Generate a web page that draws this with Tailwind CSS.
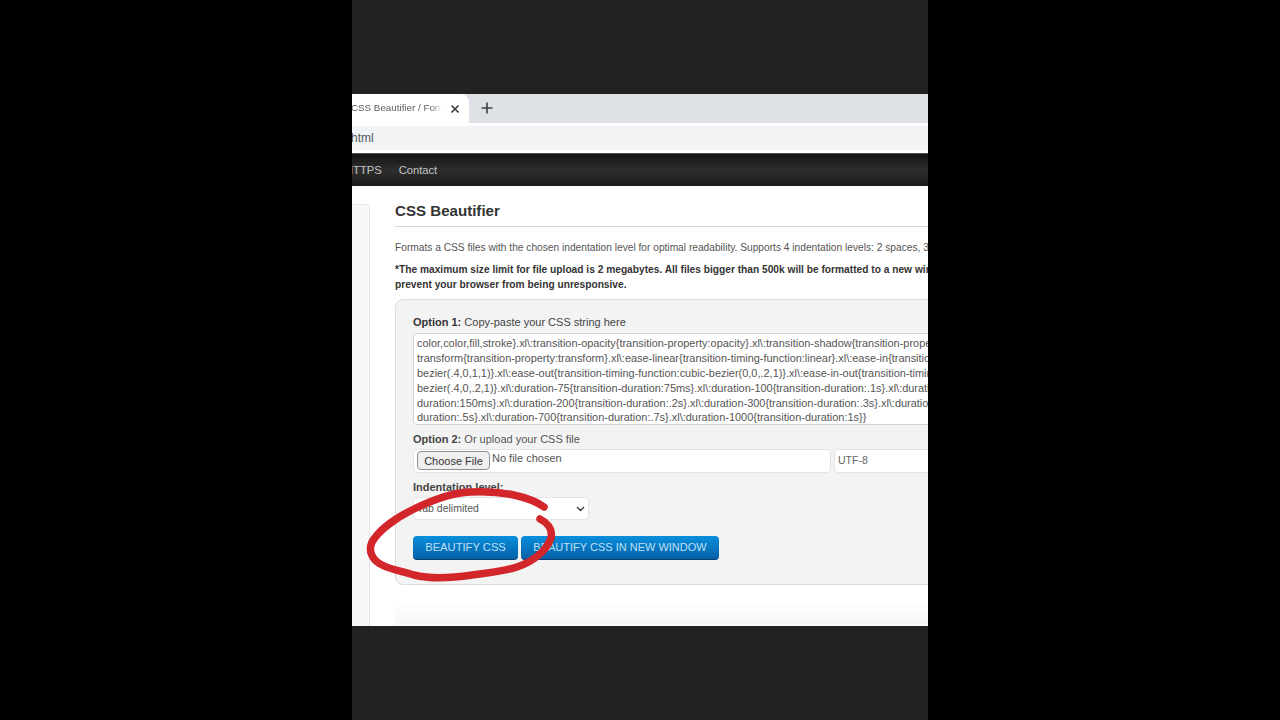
<!DOCTYPE html>
<html lang="en">
<head>
    <meta charset="UTF-8">
    <title>CSS Beautifier</title>
    <script src="https://cdn.jsdelivr.net/npm/@tailwindcss/browser@4"></script>
</head>
<body class="bg-black h-[720px] overflow-hidden font-['Liberation_Sans',Arial,sans-serif]">
    <div class="relative w-[576px] h-[720px] mx-auto bg-[#222222] pt-[94px] overflow-hidden">
        <div class="h-[532px] bg-white overflow-hidden">

            <!-- tab strip -->
            <div class="flex items-center h-[29px] bg-[#dee1e6]">
                <div class="flex items-center justify-between w-[117px] h-full bg-white rounded-tr-lg pr-[9px] -mr-px">
                    <span class="w-[91px] overflow-hidden whitespace-nowrap text-[9.8px] text-[#5a5d60] -ml-px [mask-image:linear-gradient(to_right,black_88%,transparent)]">CSS Beautifier / Format</span>
                    <svg class="w-[10px] h-[10px]" viewBox="0 0 10 10" fill="none" stroke="#3c4043" stroke-width="1.7"><path d="M1.5 1.5l7 7M8.5 1.5l-7 7"/></svg>
                </div>
                <svg class="w-3 h-3 ml-[13px] -mt-[2px]" viewBox="0 0 12 12" fill="none" stroke="#3c4043" stroke-width="1.6"><path d="M6 .5v11M.5 6h11"/></svg>
            </div>

            <!-- url bar -->
            <div class="h-[30px] bg-white pt-[3px]">
                <div class="h-6 bg-[#f1f3f4] text-xs leading-6 text-[#55585b] -ml-px">html</div>
            </div>

            <!-- nav -->
            <div class="flex items-center h-[33px] gap-[17px] bg-gradient-to-b from-[#151515] via-[#2e2e2e] to-[#1c1c1c] border-t border-[#555] text-[11.2px] text-[#c4c4c4] whitespace-nowrap">
                <span class="-ml-[7px]">HTTPS</span>
                <span>Contact</span>
            </div>

            <div class="flex pt-[18px]">
                <div class="w-[18px] h-[430px] shrink-0 bg-[#f8f8f8] border-t border-r border-[#e6e6e6] rounded-tr"></div>

                <div class="ml-[25px] w-[600px] shrink-0">
                    <h1 class="h-[23px] text-[15.1px] leading-[14px] font-bold text-[#333] border-b border-[#d6d6d6]">CSS Beautifier</h1>
                    <p class="mt-[14px] text-[10.2px] leading-[14px] text-[#555] whitespace-nowrap">Formats a CSS files with the chosen indentation level for optimal readability. Supports 4 indentation levels: 2 spaces, 3 spaces, 4 spaces and tabs.</p>
                    <p class="mt-[7px] text-[10.2px] leading-[15px] font-bold text-[#333] whitespace-nowrap">*The maximum size limit for file upload is 2 megabytes. All files bigger than 500k will be formatted to a new window to<br>prevent your browser from being unresponsive.</p>

                    <!-- form panel -->
                    <div class="mt-[7px] h-[286px] bg-[#f3f3f3] border border-[#dcdcdc] rounded-tl-lg rounded-bl-lg pl-[17px] pt-[15px]">
                        <p class="text-[11px] leading-[14px] text-[#444]"><b class="text-[#333]">Option 1:</b> Copy-paste your CSS string here</p>
                        <div class="mt-1 h-[92px] bg-white border border-[#cbd5de] rounded-sm overflow-hidden pl-[3px] text-[10.95px] leading-[14.9px] text-[#555] whitespace-nowrap">
                            <div class="-mt-[13px]">
                                <div>transition-property:background-color,border-color,fill,stroke,opacity,box-shadow,transform;.xl\:transition-colors{transition-property:background-</div>
                                <div>color,color,fill,stroke}.xl\:transition-opacity{transition-property:opacity}.xl\:transition-shadow{transition-property:box-shadow}</div>
                                <div>transform{transition-property:transform}.xl\:ease-linear{transition-timing-function:linear}.xl\:ease-in{transition-timing-function:cubic-</div>
                                <div>bezier(.4,0,1,1)}.xl\:ease-out{transition-timing-function:cubic-bezier(0,0,.2,1)}.xl\:ease-in-out{transition-timing-function:cubic-</div>
                                <div>bezier(.4,0,.2,1)}.xl\:duration-75{transition-duration:75ms}.xl\:duration-100{transition-duration:.1s}.xl\:duration-150{transition-</div>
                                <div>duration:150ms}.xl\:duration-200{transition-duration:.2s}.xl\:duration-300{transition-duration:.3s}.xl\:duration-500{transition-</div>
                                <div>duration:.5s}.xl\:duration-700{transition-duration:.7s}.xl\:duration-1000{transition-duration:1s}}</div>
                            </div>
                        </div>

                        <p class="mt-[7px] text-[11px] leading-[14px] text-[#555]"><b class="text-[#444]">Option 2:</b> Or upload your CSS file</p>
                        <div class="flex mt-[3px] gap-[3px]">
                            <div class="flex items-start w-[418px] h-6 bg-white border border-[#e4e4e4] rounded-sm pl-[3px] pt-px">
                                <button class="w-[73px] h-[19px] bg-[#efefef] border border-[#8f8f8f] rounded-sm text-[11px] leading-[16px] text-[#333]">Choose File</button>
                                <span class="ml-[2px] text-[11px] leading-[14px] text-[#555]">No file chosen</span>
                            </div>
                            <div class="w-[150px] h-6 bg-white border border-[#e4e4e4] rounded-sm pl-[3px] text-[10.5px] leading-[21px] text-[#666]">UTF-8</div>
                        </div>

                        <p class="mt-[7px] text-[11px] leading-[14px] font-bold text-[#444]">Indentation level:</p>
                        <div class="flex items-center justify-between w-44 h-[23px] mt-[3px] bg-white border border-[#e4e4e4] rounded-sm pl-[3px] pr-[3px] text-[10.5px] text-[#555]">
                            <span>Tab delimited</span>
                            <svg class="w-[9px] h-[6px]" viewBox="0 0 9 6" fill="none" stroke="#444" stroke-width="1.5"><path d="M1 1l3.5 3.5L8 1"/></svg>
                        </div>

                        <div class="flex gap-[3px] mt-4">
                            <button class="w-[105px] h-6 rounded-sm bg-gradient-to-b from-[#0a8fdc] to-[#0560a8] border-b border-[#04406f] text-[11.2px] text-[#bfe0f6]">BEAUTIFY CSS</button>
                            <button class="w-[198px] h-6 rounded-sm bg-gradient-to-b from-[#0a8fdc] to-[#0560a8] border-b border-[#04406f] text-[11px] text-[#bfe0f6]">BEAUTIFY CSS IN NEW WINDOW</button>
                        </div>
                    </div>

                    <div class="mt-[16px] h-6 bg-gradient-to-b from-white to-[#f6f6f6]"></div>
                </div>
            </div>
        </div>

        <!-- red marker circle -->
        <svg class="absolute left-0 top-0 w-[576px] h-[720px] pointer-events-none" viewBox="352 0 576 720" fill="none" stroke="#d3262b" stroke-width="7.5" stroke-linecap="round" stroke-linejoin="round">
            <path d="M544 507C530 497 502 490 470 492C448 493 428 502 412 510C396 518 379 530 372 542C368 551 372 560 382 565C392 570 402 571 414 575C430 579 452 578 472 575C490 573 505 571 517 567C532 562 546 552 551 538C553 528 546 522 540 519"/>
        </svg>
    </div>
</body>
</html>
